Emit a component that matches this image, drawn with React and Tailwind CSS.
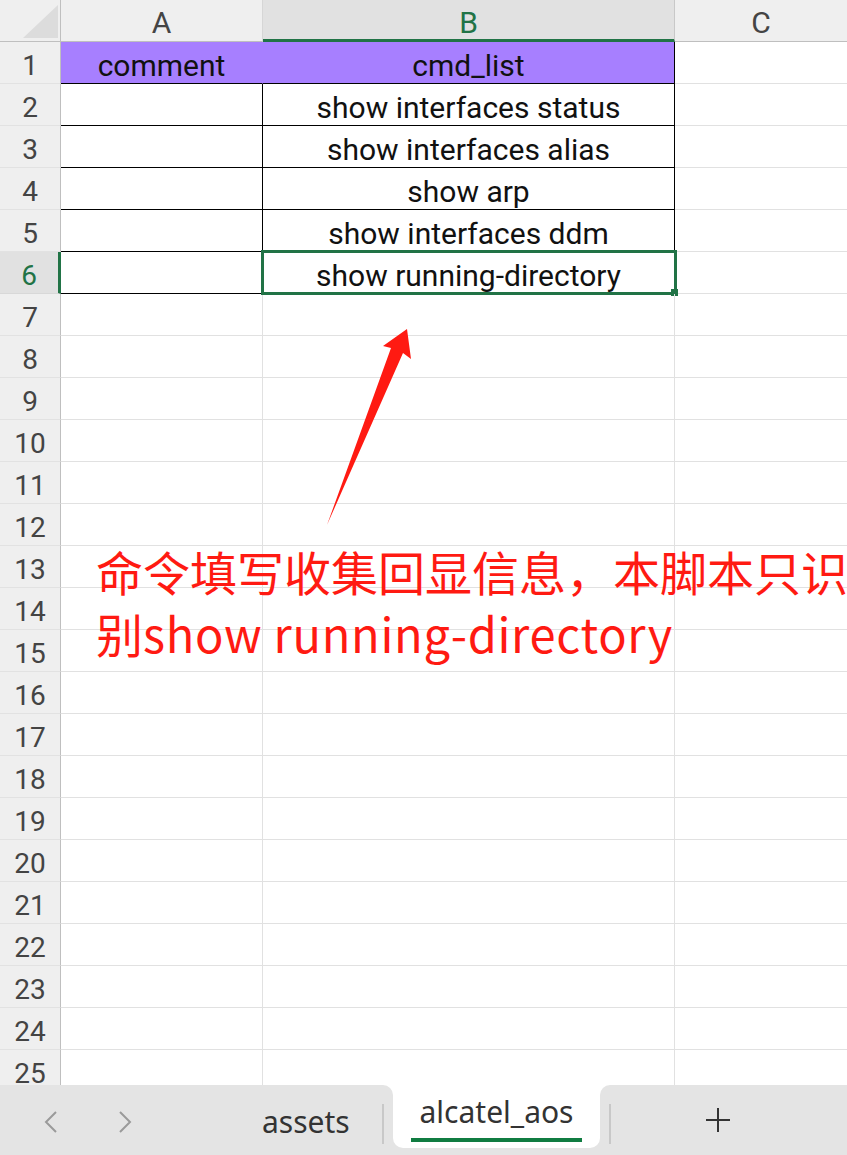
import React from "react";

const DATA = {
  1: ["comment", "cmd_list"],
  2: ["", "show interfaces status"],
  3: ["", "show interfaces alias"],
  4: ["", "show arp"],
  5: ["", "show interfaces ddm"],
  6: ["", "show running-directory"],
};

const ROWS = Array.from({ length: 25 }, (_, i) => i + 1);

function Row({ n }) {
  const [a, b] = DATA[n] || ["", ""];
  const head = n === 1;
  const boxed = n <= 6;
  const selected = n === 6;

  const rowHead = selected
    ? "w-[61px] shrink-0 flex items-center justify-center pt-[6px] text-[28px] bg-[#e1e1e1] text-[#217346] border-b border-b-[#d8d8d8] border-r-[3px] border-r-[#217346]"
    : "w-[61px] shrink-0 flex items-center justify-center pt-[6px] text-[28px] bg-[#efefef] text-[#444] border-b border-b-[#e2e2e2] border-r border-r-[#bfbfbf]";

  let cellA = "w-[202px] shrink-0 flex items-center justify-center border-b border-r border-[#e1e1e1]";
  let cellB = "w-[412px] shrink-0 relative flex items-center justify-center border-b border-r border-[#e1e1e1]";
  if (head) {
    cellA = "w-[202px] shrink-0 flex items-center justify-center bg-[#a77fff] border-b border-b-black border-r border-r-[#a77fff]";
    cellB = "w-[412px] shrink-0 relative flex items-center justify-center bg-[#a77fff] border-b border-r border-black";
  } else if (boxed) {
    cellA = "w-[202px] shrink-0 flex items-center justify-center border-b border-r border-black";
    cellB = "w-[412px] shrink-0 relative flex items-center justify-center border-b border-r border-black";
  }

  return (
    <div className="flex h-[42px] shrink-0 leading-none">
      <div className={rowHead}>{n}</div>
      <div className={cellA}>
        <span className="text-[30px] text-[#111] pt-[6px]">{a}</span>
      </div>
      <div className={cellB}>
        <span className="text-[30px] text-[#111] pt-[6px]">{b}</span>
        {selected && (
          <div className="absolute -left-[2px] -top-[2px] -right-[3px] -bottom-[2px] border-[3px] border-[#217346]">
            <div className="absolute -right-[4px] -bottom-[4px] w-[7px] h-[7px] bg-[#217346]" />
          </div>
        )}
      </div>
      <div className="flex-1 border-b border-[#e1e1e1]" />
    </div>
  );
}

function ColumnHeader() {
  return (
    <div className="flex h-[42px] shrink-0 text-[30px] leading-none">
      <div className="w-[61px] shrink-0 bg-[#efefef] border-r border-b border-[#bfbfbf] relative">
        <svg className="absolute left-0 top-0" width="61" height="42" viewBox="0 0 61 42">
          <polygon points="23,38 58,38 58,5" fill="#dcdcdc" />
        </svg>
      </div>
      <div className="w-[202px] shrink-0 flex items-center justify-center bg-[#efefef] text-[#444] border-b border-r border-[#bfbfbf] border-r-[#d6d6d6] pt-[5px]">
        A
      </div>
      <div className="w-[412px] shrink-0 flex items-center justify-center bg-[#e1e1e1] text-[#217346] border-b-[3px] border-b-[#217346] border-r border-r-[#c8c8c8] pt-[6px]">
        B
      </div>
      <div className="flex-1 flex items-center justify-center bg-[#efefef] text-[#444] border-b border-[#bfbfbf] pt-[5px]">
        C
      </div>
    </div>
  );
}

function SheetTabs() {
  return (
    <div
      className="flex h-[70px] shrink-0 bg-white text-[#333]"
      style={{ fontFamily: "'Noto Sans', 'Open Sans', sans-serif" }}
    >
      <div className="w-[393px] shrink-0 flex items-center bg-[#e4e4e4] rounded-tr-[10px] pt-[4px]">
        <span className="w-[102px] flex justify-center text-[#9a9a9a]">
          <svg width="16" height="24" viewBox="0 0 16 24" fill="none" stroke="currentColor" strokeWidth="2">
            <path d="M13 2 L3 12 L13 22" />
          </svg>
        </span>
        <span className="w-[46px] flex justify-center text-[#9a9a9a]">
          <svg width="16" height="24" viewBox="0 0 16 24" fill="none" stroke="currentColor" strokeWidth="2">
            <path d="M3 2 L13 12 L3 22" />
          </svg>
        </span>
        <span className="ml-[114px] text-[30px] leading-none">assets</span>
        <span className="ml-auto mr-[9px] w-[2px] h-[40px] bg-[#c8c8c8] mt-[4px]" />
      </div>
      <div className="w-[207px] shrink-0 bg-[#e4e4e4]">
        <div className="h-[63px] bg-white rounded-b-[10px] flex flex-col items-center justify-end pb-[6px]">
          <span className="text-[30px] leading-none pb-[11px]">alcatel_aos</span>
          <span className="w-[171px] h-[4px] bg-[#107c41]" />
        </div>
      </div>
      <div className="flex-1 flex items-center bg-[#e4e4e4] rounded-tl-[10px]">
        <span className="ml-[9px] w-[2px] h-[40px] bg-[#c8c8c8] mt-[8px]" />
        <span className="ml-[94px]">
          <svg width="26" height="26" viewBox="0 0 26 26" stroke="#333" strokeWidth="2">
            <path d="M13 1 V25 M1 13 H25" />
          </svg>
        </span>
      </div>
    </div>
  );
}

export default function App() {
  return (
    <div
      className="relative w-[847px] h-[1155px] flex flex-col bg-white overflow-hidden"
      style={{ fontFamily: "Roboto, 'Noto Sans', 'Noto Sans CJK SC', sans-serif" }}
    >
      <div className="flex-1 flex flex-col overflow-hidden">
        <ColumnHeader />
        {ROWS.map((n) => (
          <Row key={n} n={n} />
        ))}
      </div>
      <SheetTabs />

      <svg className="absolute left-[300px] top-[300px] pointer-events-none" width="130" height="240" viewBox="300 300 130 240">
        <polygon points="327,525 391,348 383,346 407,329 411,359 403,353" fill="#ff1a12" />
      </svg>

      <div
        className="absolute left-[96px] top-[540px] whitespace-nowrap text-[47px] leading-[62px] text-[#ff1a12] pointer-events-none"
        style={{ fontFamily: "'Noto Sans CJK SC', 'Noto Sans', sans-serif" }}
      >
        命令填写收集回显信息，本脚本只识
        <br />
        别<span className="tracking-[0.7px]">show running-directory</span>
      </div>
    </div>
  );
}
